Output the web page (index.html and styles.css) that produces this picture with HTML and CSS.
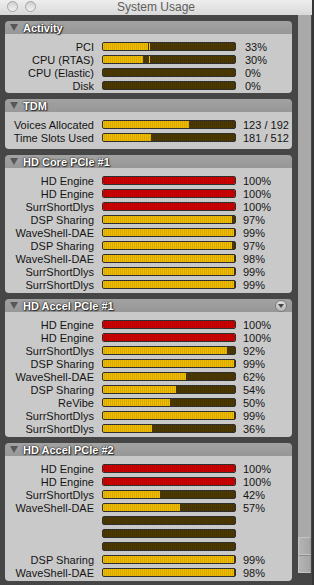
FILE: index.html
```html
<!DOCTYPE html>
<html lang="en">
<head>
    <meta charset="UTF-8">
    <meta name="viewport" content="width=device-width, initial-scale=1.0">
    <title>System Usage</title>
    <link rel="stylesheet" href="styles.css">
</head>
<body>
    <div class="window">
        <div class="titlebar">
            <div class="lights">
                <span class="light"></span>
                <span class="light"></span>
            </div>
            <span class="title">System Usage</span>
        </div>

        <div class="main">
            <div class="panels">
                <section class="panel panel-activity">
                    <div class="panel-head"><span class="tri"></span>Activity</div>
                    <div class="panel-body">
                        <div class="row"><span class="label">PCI</span><span class="bar"><span class="fill" style="width: 34%"></span><span class="peak" style="left: 34.5%"></span></span><span class="value">33%</span></div>
                        <div class="row"><span class="label">CPU (RTAS)</span><span class="bar"><span class="fill" style="width: 30%"></span><span class="peak" style="left: 35%"></span></span><span class="value">30%</span></div>
                        <div class="row"><span class="label">CPU (Elastic)</span><span class="bar"></span><span class="value">0%</span></div>
                        <div class="row"><span class="label">Disk</span><span class="bar"></span><span class="value">0%</span></div>
                    </div>
                </section>

                <section class="panel panel-tdm">
                    <div class="panel-head"><span class="tri"></span>TDM</div>
                    <div class="panel-body">
                        <div class="row"><span class="label">Voices Allocated</span><span class="bar"><span class="fill" style="width: 65%"></span></span><span class="value">123 / 192</span></div>
                        <div class="row"><span class="label">Time Slots Used</span><span class="bar"><span class="fill" style="width: 36%"></span></span><span class="value">181 / 512</span></div>
                    </div>
                </section>

                <section class="panel">
                    <div class="panel-head"><span class="tri"></span>HD Core PCIe #1</div>
                    <div class="panel-body">
                        <div class="row"><span class="label">HD Engine</span><span class="bar"><span class="fill red" style="width: 100%"></span></span><span class="value">100%</span></div>
                        <div class="row"><span class="label">HD Engine</span><span class="bar"><span class="fill red" style="width: 100%"></span></span><span class="value">100%</span></div>
                        <div class="row"><span class="label">SurrShortDlys</span><span class="bar"><span class="fill red" style="width: 100%"></span></span><span class="value">100%</span></div>
                        <div class="row"><span class="label">DSP Sharing</span><span class="bar"><span class="fill" style="width: 98%"></span></span><span class="value">97%</span></div>
                        <div class="row"><span class="label">WaveShell-DAE</span><span class="bar"><span class="fill" style="width: 99%"></span></span><span class="value">99%</span></div>
                        <div class="row"><span class="label">DSP Sharing</span><span class="bar"><span class="fill" style="width: 98%"></span></span><span class="value">97%</span></div>
                        <div class="row"><span class="label">WaveShell-DAE</span><span class="bar"><span class="fill" style="width: 99%"></span></span><span class="value">98%</span></div>
                        <div class="row"><span class="label">SurrShortDlys</span><span class="bar"><span class="fill" style="width: 99%"></span></span><span class="value">99%</span></div>
                        <div class="row"><span class="label">SurrShortDlys</span><span class="bar"><span class="fill" style="width: 99%"></span></span><span class="value">99%</span></div>
                    </div>
                </section>

                <section class="panel">
                    <div class="panel-head"><span class="tri"></span>HD Accel PCIe #1<span class="menu-btn"></span></div>
                    <div class="panel-body">
                        <div class="row"><span class="label">HD Engine</span><span class="bar"><span class="fill red" style="width: 100%"></span></span><span class="value">100%</span></div>
                        <div class="row"><span class="label">HD Engine</span><span class="bar"><span class="fill red" style="width: 100%"></span></span><span class="value">100%</span></div>
                        <div class="row"><span class="label">SurrShortDlys</span><span class="bar"><span class="fill" style="width: 94%"></span></span><span class="value">92%</span></div>
                        <div class="row"><span class="label">DSP Sharing</span><span class="bar"><span class="fill" style="width: 99%"></span></span><span class="value">99%</span></div>
                        <div class="row"><span class="label">WaveShell-DAE</span><span class="bar"><span class="fill" style="width: 63%"></span></span><span class="value">62%</span></div>
                        <div class="row"><span class="label">DSP Sharing</span><span class="bar"><span class="fill" style="width: 55%"></span></span><span class="value">54%</span></div>
                        <div class="row"><span class="label">ReVibe</span><span class="bar"><span class="fill" style="width: 51%"></span></span><span class="value">50%</span></div>
                        <div class="row"><span class="label">SurrShortDlys</span><span class="bar"><span class="fill" style="width: 99%"></span></span><span class="value">99%</span></div>
                        <div class="row"><span class="label">SurrShortDlys</span><span class="bar"><span class="fill" style="width: 37%"></span></span><span class="value">36%</span></div>
                    </div>
                </section>

                <section class="panel">
                    <div class="panel-head"><span class="tri"></span>HD Accel PCIe #2</div>
                    <div class="panel-body">
                        <div class="row"><span class="label">HD Engine</span><span class="bar"><span class="fill red" style="width: 100%"></span></span><span class="value">100%</span></div>
                        <div class="row"><span class="label">HD Engine</span><span class="bar"><span class="fill red" style="width: 100%"></span></span><span class="value">100%</span></div>
                        <div class="row"><span class="label">SurrShortDlys</span><span class="bar"><span class="fill" style="width: 43%"></span></span><span class="value">42%</span></div>
                        <div class="row"><span class="label">WaveShell-DAE</span><span class="bar"><span class="fill" style="width: 58%"></span></span><span class="value">57%</span></div>
                        <div class="row"><span class="label"></span><span class="bar"></span><span class="value"></span></div>
                        <div class="row"><span class="label"></span><span class="bar"></span><span class="value"></span></div>
                        <div class="row"><span class="label"></span><span class="bar"></span><span class="value"></span></div>
                        <div class="row"><span class="label">DSP Sharing</span><span class="bar"><span class="fill" style="width: 99%"></span></span><span class="value">99%</span></div>
                        <div class="row"><span class="label">WaveShell-DAE</span><span class="bar"><span class="fill" style="width: 99%"></span></span><span class="value">98%</span></div>
                    </div>
                </section>
            </div>

            <div class="scrollbar">
                <span class="scroll-btn"></span>
                <span class="scroll-btn"></span>
            </div>
        </div>
    </div>
</body>
</html>
```

FILE: styles.css
```css
body {
    font-family: "Liberation Sans", Arial, sans-serif;
    background-color: #363636;
    margin: 0;
    padding: 0;
    width: 314px;
    height: 585px;
    overflow: hidden;
}
.window {
    width: 312px;
    height: 585px;
    display: flex;
    flex-direction: column;
}
.titlebar {
    height: 15px;
    flex: none;
    display: grid;
    grid-template-columns: 1fr auto 1fr;
    align-items: center;
    background: linear-gradient(#eeeeee, #d9d9d9);
}
.lights {
    display: flex;
    gap: 7px;
    padding-left: 7px;
}
.light {
    width: 9px;
    height: 9px;
    border-radius: 50%;
    border: 1px solid #a4a4a4;
    background: linear-gradient(#d0d0d0, #f2f2f2);
    margin-top: -2px;
}
.title {
    font-size: 12px;
    color: #5e5e5e;
    line-height: 15px;
}
.main {
    flex: 1;
    display: flex;
    background-color: #464646;
    overflow: hidden;
}
.panels {
    width: 287px;
    margin: 6px 0 0 5px;
    display: flex;
    flex-direction: column;
    gap: 6px;
}
.panel-head {
    height: 13px;
    display: flex;
    align-items: center;
    gap: 5px;
    padding-left: 5px;
    background: linear-gradient(#a2a2a2, #979797);
    border-radius: 4px 4px 0 0;
    font-size: 11px;
    font-weight: bold;
    color: #fff;
    text-shadow: 0 0 2px #222, 0 0 1px #111, 1px 1px 1px #333;
}
.tri {
    width: 0;
    height: 0;
    border-left: 4px solid transparent;
    border-right: 4px solid transparent;
    border-top: 7px solid #575757;
}
.menu-btn {
    margin-left: auto;
    margin-right: 5px;
    width: 10px;
    height: 10px;
    border-radius: 50%;
    border: 1px solid #7a7a7a;
    background: linear-gradient(#e2e2e2, #b4b4b4);
    display: flex;
    align-items: center;
    justify-content: center;
}
.menu-btn::after {
    content: "";
    border-left: 3px solid transparent;
    border-right: 3px solid transparent;
    border-top: 4px solid #444;
    margin-top: 1px;
}
.panel-body {
    background-color: #c9c9c9;
    padding: 6px 0 2px;
    border-radius: 0 0 4px 4px;
}
.panel-activity .panel-body {
    padding-bottom: 1px;
}
.panel-tdm .panel-body {
    padding-bottom: 5px;
}
.row {
    height: 13px;
    display: flex;
    align-items: center;
    font-size: 11px;
    color: #141414;
}
.label {
    width: 89px;
    text-align: right;
    white-space: nowrap;
}
.bar {
    position: relative;
    width: 134px;
    height: 9px;
    margin-left: 8px;
    box-sizing: border-box;
    border: 1px solid #2f2f2f;
    border-radius: 2px;
    overflow: hidden;
    background: repeating-linear-gradient(90deg, #4d3a00 0 1px, #443300 1px 2px);
}
.fill {
    display: block;
    height: 100%;
    background: repeating-linear-gradient(90deg, #efbc00 0 1px, #d9a900 1px 2px);
}
.fill.red {
    background: repeating-linear-gradient(90deg, #cf0000 0 1px, #b70000 1px 2px);
}
.peak {
    position: absolute;
    top: 0;
    bottom: 0;
    width: 1px;
    background-color: #f6c400;
}
.value {
    margin-left: 7px;
    white-space: nowrap;
}
.panel-activity .value {
    margin-left: 9px;
}
.scrollbar {
    width: 13px;
    margin: 0 0 12px 6px;
    background-color: #a9a9a9;
    display: flex;
    flex-direction: column;
    justify-content: flex-end;
}
.scroll-btn {
    height: 16px;
    border: 1px solid #c4c4c4;
    border-right-color: #9a9a9a;
    background: linear-gradient(90deg, #b4b4b4, #a6a6a6);
}
.scroll-btn + .scroll-btn {
    border-top-color: #8d8d8d;
}
```
